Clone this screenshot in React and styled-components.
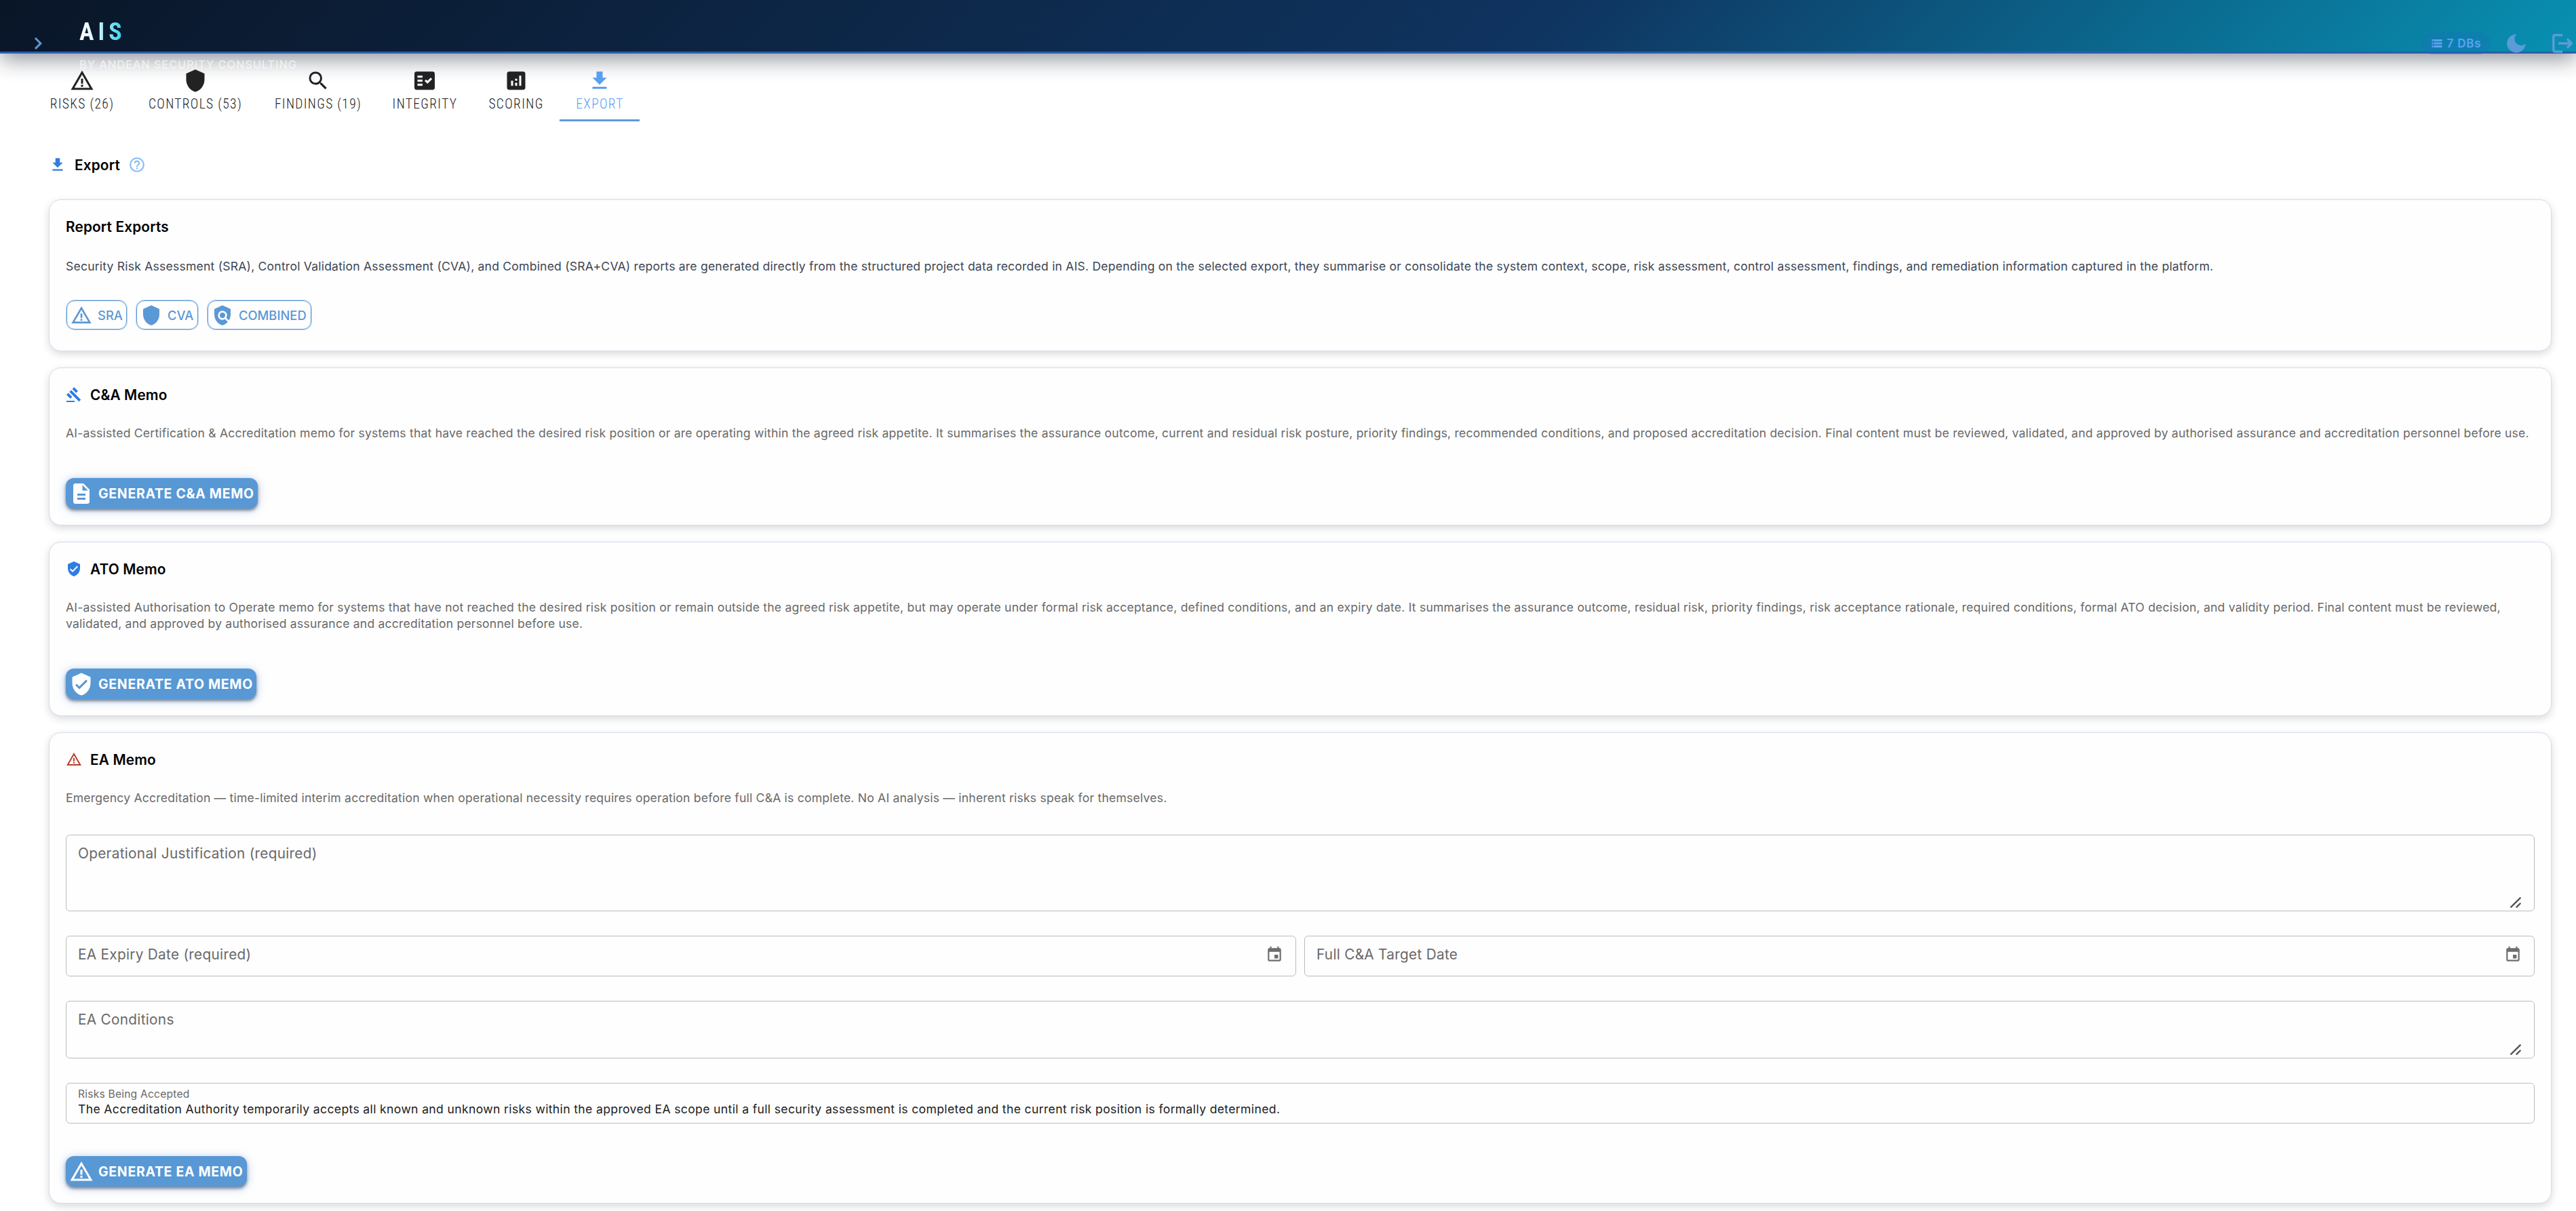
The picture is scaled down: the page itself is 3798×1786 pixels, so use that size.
import React from "react";
import styled, { createGlobalStyle } from "styled-components";
import {
  MdWarningAmber,
  MdShield,
  MdSearch,
  MdFactCheck,
  MdAnalytics,
  MdFileDownload,
  MdHelpOutline,
  MdPolicy,
  MdGavel,
  MdDescription,
  MdVerifiedUser,
  MdEvent,
  MdChevronRight,
  MdStorage,
} from "react-icons/md";

// --- Data ---
const TABS = [
  { label: "RISKS (26)", icon: <MdWarningAmber />, width: 147 },
  { label: "CONTROLS (53)", icon: <MdShield />, width: 187 },
  { label: "FINDINGS (19)", icon: <MdSearch />, width: 175 },
  { label: "INTEGRITY", icon: <MdFactCheck />, width: 140 },
  { label: "SCORING", icon: <MdAnalytics />, width: 129 },
  { label: "EXPORT", icon: <MdFileDownload />, width: 118, active: true },
];

const REPORTS = [
  { label: "SRA", icon: <MdWarningAmber />, width: 89 },
  { label: "CVA", icon: <MdShield />, width: 91 },
  { label: "COMBINED", icon: <MdPolicy />, width: 153 },
];

const App = () => {
  return (
    <Page>
      <GlobalStyle />
      <Header>
        <Toolbar>
          <MenuToggle>
            <MdChevronRight />
          </MenuToggle>
          <Brand>
            <BrandName>AIS</BrandName>
            <BrandSub>BY ANDEAN SECURITY CONSULTING</BrandSub>
          </Brand>
          <DbChip>
            <MdStorage />
            <span>7 DBs</span>
          </DbChip>
          <MoonIcon />
          <LogoutIcon />
        </Toolbar>
      </Header>

      <TabBar>
        {TABS.map((tab) => (
          <Tab key={tab.label} $active={tab.active} $width={tab.width}>
            {tab.icon}
            <TabLabel>{tab.label}</TabLabel>
          </Tab>
        ))}
      </TabBar>

      <Main>
        <PageHeading>
          <MdFileDownload />
          <h2>Export</h2>
          <HelpIcon />
        </PageHeading>

        <Card $height={224}>
          <CardTitle>Report Exports</CardTitle>
          <Description $dark $gap={38}>
            Security Risk Assessment (SRA), Control Validation Assessment (CVA),
            and Combined (SRA+CVA) reports are generated directly from the
            structured project data recorded in AIS. Depending on the selected
            export, they summarise or consolidate the system context, scope,
            risk assessment, control assessment, findings, and remediation
            information captured in the platform.
          </Description>
          <ReportButtons>
            {REPORTS.map((report) => (
              <OutlineButton key={report.label} $width={report.width}>
                {report.icon}
                {report.label}
              </OutlineButton>
            ))}
          </ReportButtons>
        </Card>

        <Card $height={233}>
          <CardTitle>
            <MdGavel />
            C&amp;A Memo
          </CardTitle>
          <Description>
            AI-assisted Certification &amp; Accreditation memo for systems that
            have reached the desired risk position or are operating within the
            agreed risk appetite. It summarises the assurance outcome, current
            and residual risk posture, priority findings, recommended
            conditions, and proposed accreditation decision. Final content must
            be reviewed, validated, and approved by authorised assurance and
            accreditation personnel before use.
          </Description>
          <PrimaryButton $width={283}>
            <MdDescription />
            GENERATE C&amp;A MEMO
          </PrimaryButton>
        </Card>

        <Card $height={257}>
          <CardTitle>
            <MdVerifiedUser />
            ATO Memo
          </CardTitle>
          <Description>
            AI-assisted Authorisation to Operate memo for systems that have not
            reached the desired risk position or remain outside the agreed risk
            appetite, but may operate under formal risk acceptance, defined
            conditions, and an expiry date. It summarises the assurance outcome,
            residual risk, priority findings, risk acceptance rationale,
            required conditions, formal ATO decision, and validity period. Final
            content must be reviewed, validated, and approved by authorised
            assurance and accreditation personnel before use.
          </Description>
          <PrimaryButton $width={281}>
            <MdVerifiedUser />
            GENERATE ATO MEMO
          </PrimaryButton>
        </Card>

        <Card $height={695}>
          <CardTitle $color="#b9402f">
            <MdWarningAmber />
            EA Memo
          </CardTitle>
          <Description $gap={42}>
            Emergency Accreditation — time-limited interim accreditation when
            operational necessity requires operation before full C&amp;A is
            complete. No AI analysis — inherent risks speak for themselves.
          </Description>
          <Form>
            <Field $height={113}>
              <FieldLabel>Operational Justification (required)</FieldLabel>
              <ResizeHandle />
            </Field>
            <FieldRow>
              <Field $height={60}>
                <FieldLabel>EA Expiry Date (required)</FieldLabel>
                <CalendarIcon />
              </Field>
              <Field $height={60}>
                <FieldLabel>Full C&amp;A Target Date</FieldLabel>
                <CalendarIcon />
              </Field>
            </FieldRow>
            <Field $height={85}>
              <FieldLabel>EA Conditions</FieldLabel>
              <ResizeHandle />
            </Field>
            <FilledField>
              <small>Risks Being Accepted</small>
              <p>
                The Accreditation Authority temporarily accepts all known and
                unknown risks within the approved EA scope until a full security
                assessment is completed and the current risk position is
                formally determined.
              </p>
            </FilledField>
          </Form>
          <PrimaryButton $width={267}>
            <MdWarningAmber />
            GENERATE EA MEMO
          </PrimaryButton>
        </Card>
      </Main>
    </Page>
  );
};

// --- Sub Components ---
const MoonIcon = () => (
  <Moon viewBox="0 0 28 28">
    <path d="M14.5 0.5 A13.6 13.6 0 1 0 27.5 14.5 A8.6 8.6 0 0 1 14.5 0.5 Z" />
  </Moon>
);

const LogoutIcon = () => (
  <Logout viewBox="0 0 30 28">
    <path d="M15 1.8H4.2a2.4 2.4 0 0 0-2.4 2.4v19.6a2.4 2.4 0 0 0 2.4 2.4H15" />
    <path d="M9 14h19M22 7.5l6.3 6.5-6.3 6.5" />
  </Logout>
);

const ResizeHandle = () => (
  <Handle viewBox="0 0 16 16">
    <path d="M1.3 14.7 14.7 1.3M9.5 14.7l5.2-5.2" />
  </Handle>
);

export default App;

// --- Styled Components ---

const GlobalStyle = createGlobalStyle`
  * {
    box-sizing: border-box;
  }

  body {
    margin: 0;
    background: #fff;
    font-family: Inter, "Liberation Sans", sans-serif;
    color: #000;
  }

  h2, h3, p {
    margin: 0;
  }

  button {
    font-family: inherit;
  }
`;

const Page = styled.div`
  height: 1786px;
  overflow: hidden;
  display: flex;
  flex-direction: column;
`;

// The toolbar is taller than the header, so the subtitle hangs below it
const Header = styled.header`
  height: 79px;
  flex-shrink: 0;
  background: linear-gradient(135deg, #0a1628 0%, #0f3460 60%, #0891b2 100%);
  border-bottom: 3px solid #2a5eab;
  box-shadow: 0 8px 32px rgba(10, 22, 40, 0.48);
`;

const Toolbar = styled.div`
  height: 128px;
  padding: 0 5px 0 38px;
  display: flex;
  align-items: center;
  color: #5b9bd8;
`;

const MenuToggle = styled.div`
  width: 36px;
  height: 36px;
  font-size: 36px;
`;

const Brand = styled.div`
  display: flex;
  flex-direction: column;
  flex: 1;
  margin-left: 43px;
`;

const BrandName = styled.div`
  width: 68px;
  font-family: Roboto, "Liberation Sans", sans-serif;
  font-stretch: 75%;
  font-size: 36px;
  font-weight: 700;
  line-height: 56px;
  letter-spacing: 6px;
  background: linear-gradient(90deg, #fff 0%, #d8f2fb 35%, #22d3ee 100%);
  background-clip: text;
  color: transparent;
`;

const BrandSub = styled.div`
  margin-top: 6px;
  font-size: 16.5px;
  font-weight: 500;
  line-height: 28px;
  letter-spacing: 0.85px;
  color: rgba(255, 255, 255, 0.6);
`;

const DbChip = styled.div`
  width: 102px;
  height: 32px;
  margin-right: 24px;
  display: flex;
  align-items: center;
  justify-content: center;
  gap: 6px;
  border: 1px solid rgba(37, 99, 200, 0.2);
  border-radius: 16px;
  background: rgba(37, 99, 200, 0.2);
  color: #5ba4f0;
  font-size: 17px;
  font-weight: 600;
  letter-spacing: 0.8px;

  svg {
    width: 18px;
    height: 18px;
  }
`;

const Moon = styled.svg`
  width: 28px;
  height: 28px;
  margin-right: 39px;
  fill: currentColor;
`;

const Logout = styled.svg`
  width: 30px;
  height: 28px;
  fill: none;
  stroke: currentColor;
  stroke-width: 3.4;
`;

const TabBar = styled.nav`
  display: flex;
  height: 100px;
  padding-left: 47px;
  flex-shrink: 0;
`;

const Tab = styled.div`
  width: ${(props) => props.$width}px;
  display: flex;
  flex-direction: column;
  align-items: center;
  padding-top: 22px;
  border-bottom: 3px solid ${(props) => (props.$active ? "#5b9bde" : "transparent")};
  color: ${(props) => (props.$active ? "#5a9ff0" : "#222")};

  svg {
    width: 36px;
    height: 36px;
  }
`;

const TabLabel = styled.span`
  margin-top: 5px;
  padding-left: 1px;
  font-family: Roboto, "Liberation Sans", sans-serif;
  font-stretch: 75%;
  font-size: 19.6px;
  font-weight: 350;
  line-height: 24px;
  letter-spacing: 1.3px;
  white-space: nowrap;
`;

const Main = styled.main`
  padding: 0 36px 0 72px;
  display: flex;
  flex-direction: column;
  gap: 24px;
`;

const PageHeading = styled.div`
  height: 91px;
  padding-top: 37px;
  display: flex;
  align-items: center;
  color: #2f7de0;

  svg {
    width: 26px;
    height: 26px;
  }

  h2 {
    margin: 0 12px 0 12px;
    color: #000;
    font-size: 20.8px;
    font-weight: 600;
    letter-spacing: 0.15px;
  }
`;

const HelpIcon = styled(MdHelpOutline)`
  color: #8abcf5;
`;

const Card = styled.section`
  height: ${(props) => props.$height}px;
  padding: 25px 24px 0;
  border: 1px solid #d6dde8;
  border-radius: 18px;
  background: #fefefe;
  box-shadow: 0 4px 12px rgba(15, 23, 42, 0.16);
`;

const CardTitle = styled.h3`
  display: flex;
  align-items: center;
  gap: 12px;
  height: 28px;
  font-size: 20.8px;
  font-weight: 600;
  letter-spacing: 0.15px;

  svg {
    width: 24px;
    height: 24px;
    color: ${(props) => props.$color || "#2f7de0"};
  }
`;

const Description = styled.p`
  margin: ${(props) => (props.$dark ? 33 : 31)}px 0 ${(props) => props.$gap || 54}px;
  font-size: 17.6px;
  line-height: 24px;
  letter-spacing: 0.19px;
  color: ${(props) => (props.$dark ? "#3d4656" : "#696969")};
`;

const ReportButtons = styled.div`
  display: flex;
  gap: 14px;
  padding-left: 1px;
`;

const OutlineButton = styled.button`
  width: ${(props) => props.$width}px;
  height: 43px;
  padding: 0 0 0 5px;
  display: flex;
  align-items: center;
  gap: 8px;
  border: 1px solid #5b98d6;
  border-radius: 12px;
  background: transparent;
  box-shadow: 0 0 0 1px rgba(91, 152, 214, 0.4);
  color: #5b98d6;
  font-size: 18.4px;
  font-weight: 500;

  svg {
    width: 32px;
    height: 32px;
    flex-shrink: 0;
  }
`;

const PrimaryButton = styled.button`
  width: ${(props) => props.$width}px;
  height: 45px;
  padding: 0 0 0 5px;
  display: flex;
  align-items: center;
  gap: 7px;
  border: none;
  border-radius: 12px;
  background: #5898d5;
  color: #fff;
  font-size: 19.5px;
  font-weight: 700;
  letter-spacing: 0.68px;
  white-space: nowrap;
  box-shadow: 0 3px 4px rgba(0, 0, 0, 0.4), 0 2px 14px rgba(60, 120, 210, 0.4);

  svg {
    width: 36px;
    height: 36px;
    flex-shrink: 0;
  }
`;

const Form = styled.div`
  display: flex;
  flex-direction: column;
  gap: 36px;
  margin-bottom: 48px;
`;

const Field = styled.div`
  position: relative;
  height: ${(props) => props.$height}px;
  padding: 14px 18px 0 17px;
  display: flex;
  justify-content: space-between;
  border: 1px solid #bcbcbc;
  border-radius: 6px;
`;

const FieldRow = styled.div`
  display: grid;
  grid-template-columns: 1fr 1fr;
  gap: 12px;
`;

const FieldLabel = styled.span`
  font-size: 20.8px;
  line-height: 26px;
  letter-spacing: 0.28px;
  color: #696969;
`;

const CalendarIcon = styled(MdEvent)`
  width: 26px;
  height: 26px;
  color: #6e6e6e;
`;

const Handle = styled.svg`
  position: absolute;
  right: 19px;
  bottom: 4px;
  width: 16px;
  height: 16px;
  fill: none;
  stroke: #555;
  stroke-width: 2.4;
  stroke-linecap: round;
`;

const FilledField = styled.div`
  height: 60px;
  padding: 6px 17px 0;
  border: 1px solid #bcbcbc;
  border-radius: 6px;

  small {
    display: block;
    font-size: 15.6px;
    line-height: 20px;
    letter-spacing: 0.21px;
    color: #696969;
  }

  p {
    font-size: 17.6px;
    line-height: 24px;
    letter-spacing: 0.34px;
    color: #1c1c1c;
  }
`;
